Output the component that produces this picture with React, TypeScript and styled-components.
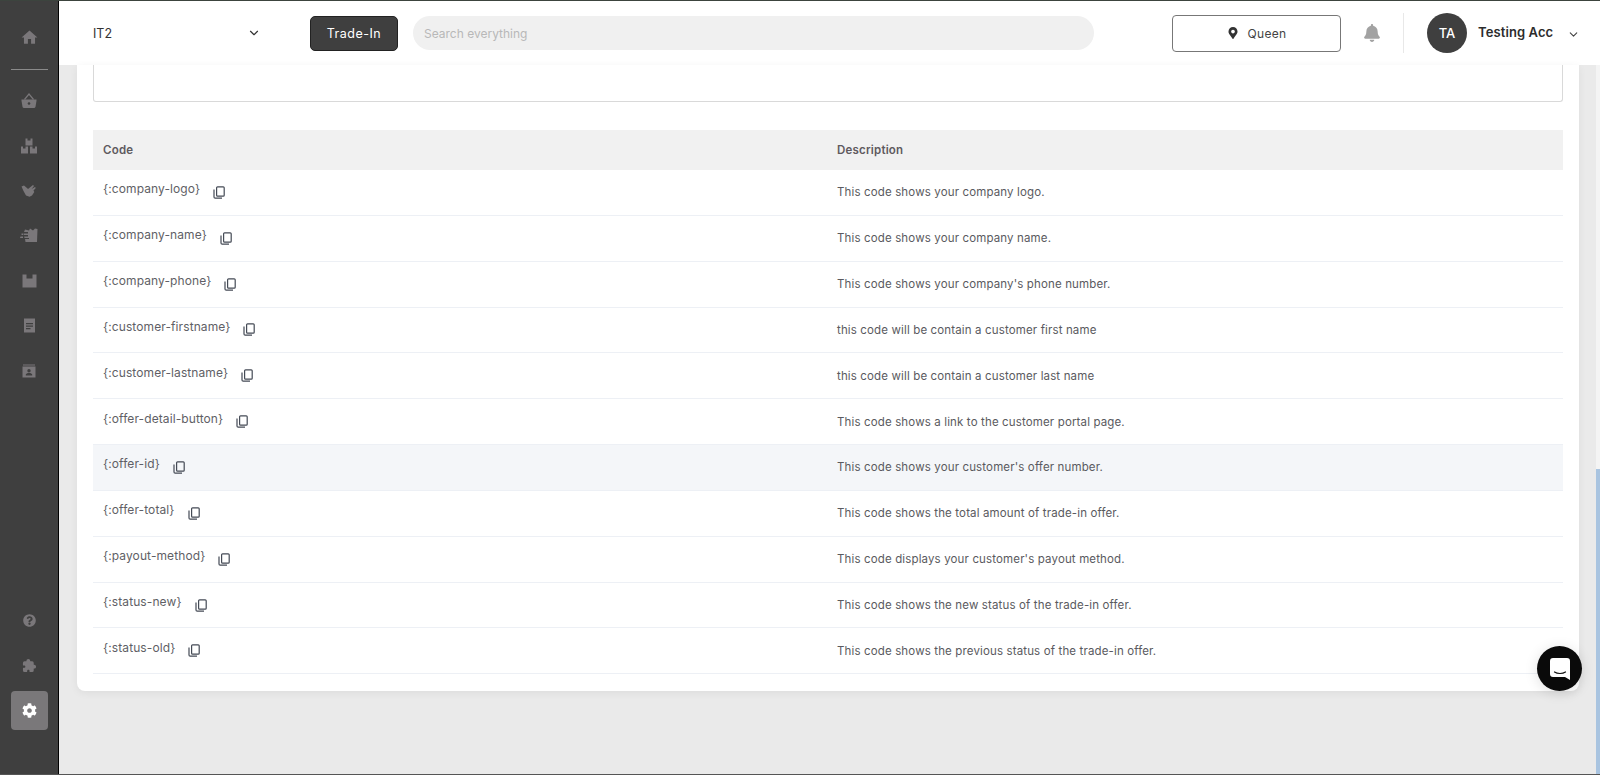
import { createGlobalStyle, styled } from "styled-components";
import { FaQuestionCircle, FaCog, FaBell, FaMapMarkerAlt } from "react-icons/fa";
import { IoExtensionPuzzle } from "react-icons/io5";
import { MdHome } from "react-icons/md";
import { FiChevronDown } from "react-icons/fi";

const FONT = `"Inter", "Noto Sans", sans-serif`;

const GlobalStyle = createGlobalStyle`
  html, body { margin: 0; padding: 0; height: 100%; overflow: hidden; }
  #root { height: 100%; }
  * { box-sizing: border-box; }
`;

const rows = [
  { code: "{:company-logo}", description: "This code shows your company logo." },
  { code: "{:company-name}", description: "This code shows your company name." },
  { code: "{:company-phone}", description: "This code shows your company's phone number." },
  { code: "{:customer-firstname}", description: "this code will be contain a customer first name" },
  { code: "{:customer-lastname}", description: "this code will be contain a customer last name" },
  { code: "{:offer-detail-button}", description: "This code shows a link to the customer portal page." },
  { code: "{:offer-id}", description: "This code shows your customer's offer number.", active: true },
  { code: "{:offer-total}", description: "This code shows the total amount of trade-in offer." },
  { code: "{:payout-method}", description: "This code displays your customer's payout method." },
  { code: "{:status-new}", description: "This code shows the new status of the trade-in offer." },
  { code: "{:status-old}", description: "This code shows the previous status of the trade-in offer." },
];

function CopyIcon() {
  return (
    <S.Copy viewBox="0 0 12 13" fill="none" stroke="#444a55" strokeWidth="1.2">
      <rect x="3.6" y="0.8" width="7.6" height="9.4" rx="1" />
      <path d="M1 3.5V11a1.2 1.2 0 0 0 1.2 1.2H9" />
    </S.Copy>
  );
}

function BasketIcon() {
  return (
    <svg width="16" height="16" viewBox="0 0 16 16" fill="currentColor">
      <path d="M0.5 6.5h15v1.2l-1 6a1.6 1.6 0 0 1-1.6 1.3H3.1a1.6 1.6 0 0 1-1.6-1.3l-1-6z" />
      <path d="M3.5 6.5 8 1l4.5 5.5" fill="none" stroke="currentColor" strokeWidth="1.2" />
      <circle cx="8" cy="10.5" r="1.3" fill="#3f3f3f" />
    </svg>
  );
}

function BoxesIcon() {
  return (
    <svg width="16" height="16" viewBox="0 0 16 16" fill="currentColor">
      <path d="M4.5 0.5h2v2h3v-2h2v7h-7z" />
      <path d="M0 8.5h2v2h2.5v-2H7v7H0z" />
      <path d="M9 8.5h2.5v2H14v-2h2v7H9z" />
    </svg>
  );
}

function HandIcon() {
  return (
    <svg width="16" height="14" viewBox="0 0 16 14" fill="currentColor">
      <path d="M0.5 2.5 3 1.5l3 2.5 1 1 5-4 1 1-2.5 3L14 3l.8 1-2.3 2.5.8 1.5-2.3 3.5-2.5 1.2-3.5-1.2L2.5 7z" />
    </svg>
  );
}

function DeliveryIcon() {
  return (
    <svg width="18" height="15" viewBox="0 0 18 15" fill="currentColor">
      <path d="M5 1.5 9 2.5l1-2 3 2 2-2 2.5.5-.5 13H5.5l-.5-3h4V10H4.5l-.3-1.500H8V7H3.700l-.2-1.500H8V4H4z" />
      <path d="M0.5 8.5H3V10H0z" />
      <path d="M1.5 5.5H3V7H1.5z" />
    </svg>
  );
}

function PackageIcon() {
  return (
    <svg width="15" height="14" viewBox="0 0 15 14" fill="currentColor">
      <path d="M0.5 0.5H4.5V4.5H10.500V0.500H14.500V13.500H0.500z" />
    </svg>
  );
}

function ReceiptIcon() {
  return (
    <svg width="13" height="15" viewBox="0 0 13 15" fill="currentColor">
      <path fillRule="evenodd" d="M1 0.5h11v14H1zM3 5v1.200h7V5zM3 7.500v1.200h7V7.500zM3 10v1.200h4.500V10z" />
    </svg>
  );
}

function ContactIcon() {
  return (
    <svg width="14" height="14" viewBox="0 0 14 14" fill="currentColor">
      <path d="M1 0.5h12v1H1z" />
      <path fillRule="evenodd" d="M0.5 2.5h13v11h-13zM7 5a1.700 1.700 0 1 0 0 3.400A1.700 1.700 0 0 0 7 5zM3.800 11.500h6.400V10.600C10.200 9.500 8.500 9 7 9s-3.200.5-3.200 1.600z" />
    </svg>
  );
}

export default function App() {
  return (
    <S.Page>
      <GlobalStyle />
      <S.Sidebar>
        <S.NavItem><MdHome size={19} /></S.NavItem>
        <S.Divider />
        <S.NavItem><BasketIcon /></S.NavItem>
        <S.NavItem><BoxesIcon /></S.NavItem>
        <S.NavItem><HandIcon /></S.NavItem>
        <S.NavItem><DeliveryIcon /></S.NavItem>
        <S.NavItem><PackageIcon /></S.NavItem>
        <S.NavItem><ReceiptIcon /></S.NavItem>
        <S.NavItem><ContactIcon /></S.NavItem>
        <S.Spacer />
        <S.NavItem><FaQuestionCircle size={13} /></S.NavItem>
        <S.NavItem><IoExtensionPuzzle size={15} /></S.NavItem>
        <S.NavItem $active><FaCog size={15} /></S.NavItem>
      </S.Sidebar>
      <S.Main>
        <S.TopBar>
          <S.StoreSelect>
            IT2
            <FiChevronDown size={14} />
          </S.StoreSelect>
          <S.TradeIn>Trade-In</S.TradeIn>
          <S.Search placeholder="Search everything" />
          <S.Location>
            <FaMapMarkerAlt size={12} color="#333" />
            Queen
          </S.Location>
          <S.Bell><FaBell size={18} /></S.Bell>
          <S.User>
            <S.Avatar>TA</S.Avatar>
            <S.UserName>Testing Acc</S.UserName>
            <FiChevronDown size={13} color="#444" />
          </S.User>
        </S.TopBar>
        <S.Body>
          <S.Content>
            <S.Card>
              <S.Preview />
              <S.HeaderRow>
                <S.HeaderCell>Code</S.HeaderCell>
                <S.HeaderCell>Description</S.HeaderCell>
              </S.HeaderRow>
              {rows.map((row) => (
                <S.Row key={row.code} $active={row.active}>
                  <S.CodeCell>
                    {row.code}
                    <CopyIcon />
                  </S.CodeCell>
                  <S.DescriptionCell>{row.description}</S.DescriptionCell>
                </S.Row>
              ))}
            </S.Card>
          </S.Content>
          <S.ScrollTrack>
            <S.ScrollThumb />
          </S.ScrollTrack>
        </S.Body>
      </S.Main>
      <S.Chat>
        <svg width="20" height="22" viewBox="0 0 20 22">
          <path d="M3 0h14a3 3 0 0 1 3 3v19l-5-3H3a3 3 0 0 1-3-3V3a3 3 0 0 1 3-3z" fill="#fff" />
          <path d="M4.5 14c3 2 8 2 11 0" fill="none" stroke="#111" strokeWidth="1.2" strokeLinecap="round" />
        </svg>
      </S.Chat>
    </S.Page>
  );
}

const S = {
  Page: styled.div`
    position: relative;
    display: flex;
    width: 1600px;
    height: 775px;
    overflow: hidden;
    border-top: 1px solid #3c443e;
    border-bottom: 1px solid #555;
    background-color: #eaeaea;
    font-family: ${FONT};
  `,
  Sidebar: styled.nav`
    flex: none;
    display: flex;
    flex-direction: column;
    align-items: center;
    width: 59px;
    padding: 14px 0 44px;
    background-color: #3f3f3f;
    border-right: 1px solid #000;
  `,
  NavItem: styled.div<{ $active?: boolean }>`
    flex: none;
    display: flex;
    justify-content: center;
    align-items: center;
    width: 37px;
    height: ${({ $active }) => ($active ? "39px" : "45px")};
    margin-top: ${({ $active }) => ($active ? "3px" : "0")};
    border-radius: 4px;
    color: ${({ $active }) => ($active ? "#fff" : "#7a777a")};
    background-color: ${({ $active }) => ($active ? "#7a787a" : "transparent")};
  `,
  Divider: styled.div`
    flex: none;
    width: 37px;
    height: 1px;
    margin: 9px 0 8px;
    background-color: #8a8a8a;
  `,
  Spacer: styled.div`
    flex: 1;
  `,
  Main: styled.div`
    flex: 1;
    display: flex;
    flex-direction: column;
    min-width: 0;
  `,
  TopBar: styled.header`
    flex: none;
    display: flex;
    align-items: center;
    height: 64px;
    padding: 0 20px 0 34px;
    background-color: #fff;
  `,
  StoreSelect: styled.div`
    flex: none;
    display: flex;
    justify-content: space-between;
    align-items: center;
    width: 168px;
    font-size: 12.5px;
    color: #333;
  `,
  TradeIn: styled.button`
    flex: none;
    width: 88px;
    height: 35px;
    margin-left: 49px;
    border: 1px solid #222;
    border-radius: 5px;
    background-color: #3f3f3f;
    color: #fff;
    font-family: ${FONT};
    font-size: 12.5px;
    font-weight: 400;
    letter-spacing: 0.5px;
  `,
  Search: styled.input`
    flex: none;
    width: 681px;
    height: 34px;
    margin-left: 15px;
    padding: 0 11px;
    border: none;
    outline: none;
    border-radius: 17px;
    background-color: #f0f0f0;
    font-family: ${FONT};
    font-size: 12px;
    &::placeholder {
      color: #b8b8b8;
      opacity: 1;
    }
  `,
  Location: styled.button`
    flex: none;
    display: flex;
    justify-content: center;
    align-items: center;
    gap: 9px;
    width: 169px;
    height: 37px;
    margin-left: 78px;
    border: 1px solid #777;
    border-radius: 4px;
    background-color: #fff;
    color: #444;
    font-family: ${FONT};
    font-size: 12px;
    letter-spacing: 0.3px;
  `,
  Bell: styled.div`
    flex: none;
    display: flex;
    justify-content: center;
    width: 20px;
    margin-left: 21px;
    color: #a2a2a2;
  `,
  User: styled.div`
    flex: none;
    display: flex;
    align-items: center;
    height: 40px;
    margin-left: 21px;
    padding-left: 23px;
    border-left: 1px solid #e8e8e8;
    svg {
      margin: 2px 0 0 14px;
    }
  `,
  Avatar: styled.div`
    flex: none;
    display: flex;
    justify-content: center;
    align-items: center;
    width: 40px;
    height: 40px;
    border-radius: 50%;
    background-color: #3f3f3f;
    color: #fff;
    font-size: 13px;
    font-weight: 500;
  `,
  UserName: styled.div`
    margin: 0 0 3px 11px;
    font-size: 13px;
    font-weight: 600;
    letter-spacing: 0.1px;
    color: #2c2c2c;
    white-space: nowrap;
  `,
  Body: styled.div`
    flex: 1;
    display: flex;
    min-height: 0;
  `,
  Content: styled.main`
    flex: 1;
    min-width: 0;
    padding: 0 17px 0 18px;
  `,
  Card: styled.section`
    padding: 0 16px 17px;
    border-radius: 0 0 8px 8px;
    background-color: #fff;
    box-shadow: 0 2px 8px rgba(0, 0, 0, 0.06);
  `,
  Preview: styled.div`
    height: 37px;
    margin-bottom: 28px;
    border: 1px solid #d9d9d9;
    border-top: none;
    border-radius: 0 0 3px 3px;
  `,
  HeaderRow: styled.div`
    display: grid;
    grid-template-columns: calc(50% - 1px) 1fr;
    height: 40px;
    background-color: #f1f1f1;
  `,
  HeaderCell: styled.div`
    align-self: center;
    padding-left: 10px;
    font-size: 11.5px;
    font-weight: 600;
    letter-spacing: 0.2px;
    color: #5f5a5f;
  `,
  Row: styled.div<{ $active?: boolean }>`
    display: grid;
    grid-template-columns: calc(50% - 1px) 1fr;
    height: 45.85px;
    border-bottom: 1px solid #edf0f5;
    background-color: ${({ $active }) => ($active ? "#f4f6f9" : "#fff")};
  `,
  CodeCell: styled.div`
    display: flex;
    align-items: center;
    gap: 13px;
    padding: 0 0 7px 10px;
    font-size: 12px;
    color: #5f5f66;
    letter-spacing: 0.1px;
  `,
  DescriptionCell: styled.div`
    align-self: center;
    padding-left: 10px;
    font-size: 11.5px;
    color: #5a5a60;
    letter-spacing: 0.14px;
  `,
  Copy: styled.svg`
    flex: none;
    width: 12px;
    height: 13px;
    margin-top: 7px;
  `,
  ScrollTrack: styled.div`
    flex: none;
    display: flex;
    width: 4px;
    background-color: #f4f4f4;
  `,
  ScrollThumb: styled.div`
    flex: 1;
    margin-top: 404px;
    background-color: #a9c4e0;
  `,
  Chat: styled.div`
    position: absolute;
    left: 1537px;
    top: 645px;
    display: flex;
    justify-content: center;
    align-items: center;
    width: 45px;
    height: 45px;
    border-radius: 50%;
    background-color: #0a0a0a;
    box-shadow: 0 2px 14px rgba(0, 0, 0, 0.12);
  `,
};
